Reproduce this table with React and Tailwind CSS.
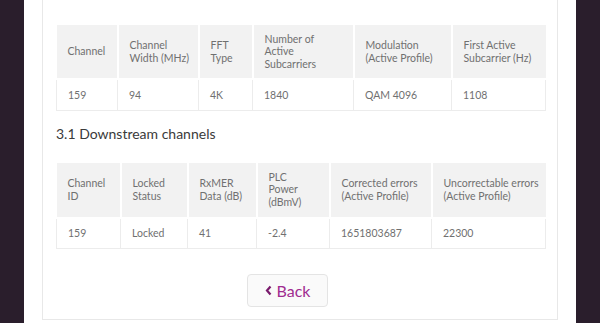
import React from "react";

const t1Cols = [61, 81, 54, 101, 98, 94];
const t1Head = [
  ["Channel"],
  ["Channel", "Width (MHz)"],
  ["FFT", "Type"],
  ["Number of", "Active", "Subcarriers"],
  ["Modulation", "(Active Profile)"],
  ["First Active", "Subcarrier (Hz)"],
];
const t1Row = ["159", "94", "4K", "1840", "QAM 4096", "1108"];

const t2Cols = [64, 67, 69, 73, 102, 114];
const t2Head = [
  ["Channel", "ID"],
  ["Locked", "Status"],
  ["RxMER", "Data (dB)"],
  ["PLC", "Power", "(dBmV)"],
  ["Corrected errors", "(Active Profile)"],
  ["Uncorrectable errors", "(Active Profile)"],
];
const t2Row = ["159", "Locked", "41", "-2.4", "1651803687", "22300"];

function DataTable({ cols, head, row, headH }) {
  return (
    <table className="border-collapse table-fixed w-[489px] text-[10.5px] leading-[12.5px] text-[#707070]">
      <colgroup>
        {cols.map((w, i) => (
          <col key={i} style={{ width: w }} />
        ))}
      </colgroup>
      <thead>
        <tr style={{ height: headH }}>
          {head.map((lines, i) => (
            <th
              key={i}
              className="bg-[#f2f2f2] border-2 border-white border-t-0 first:border-l-0 last:border-r-0 text-left font-normal align-middle pl-[11px] pr-0 whitespace-nowrap"
            >
              {lines.map((l, j) => (
                <div key={j}>{l}</div>
              ))}
            </th>
          ))}
        </tr>
      </thead>
      <tbody>
        <tr className="h-[31px]">
          {row.map((v, i) => (
            <td key={i} className="border border-[#ececec] pl-[11px] align-middle">
              {v}
            </td>
          ))}
        </tr>
      </tbody>
    </table>
  );
}

export default function App() {
  return (
    <div
      className="h-[323px] w-[600px] overflow-hidden flex bg-[#2a1e2c] px-[24px]"
      style={{ fontFamily: "Lato, 'Open Sans', sans-serif" }}
    >
      <div className="flex-1 bg-white px-[18px] h-[323px]">
        <div className="border border-t-0 border-[#e8e8e8] h-[320px] pl-[13px] pt-[25px] flex flex-col">
          <DataTable cols={t1Cols} head={t1Head} row={t1Row} headH={54} />
          <h2 className="text-[14px] leading-[18px] text-[#3a3a3a] mt-[14px] mb-[20px]">
            3.1 Downstream channels
          </h2>
          <DataTable cols={t2Cols} head={t2Head} row={t2Row} headH={55} />
          <div className="pl-[191px] mt-[25px]">
            <button className="w-[81px] h-[33px] border border-[#e4e4e4] rounded-[4px] bg-[#fafafa] flex items-center justify-center gap-[5px] text-[#a02c90] text-[16px]">
              <svg width="7" height="11" viewBox="0 0 7 11">
                <polyline
                  points="5.5,1.5 2,5.5 5.5,9.5"
                  fill="none"
                  stroke="#7a1b6d"
                  strokeWidth="2.2"
                />
              </svg>
              <span>Back</span>
            </button>
          </div>
        </div>
      </div>
    </div>
  );
}
